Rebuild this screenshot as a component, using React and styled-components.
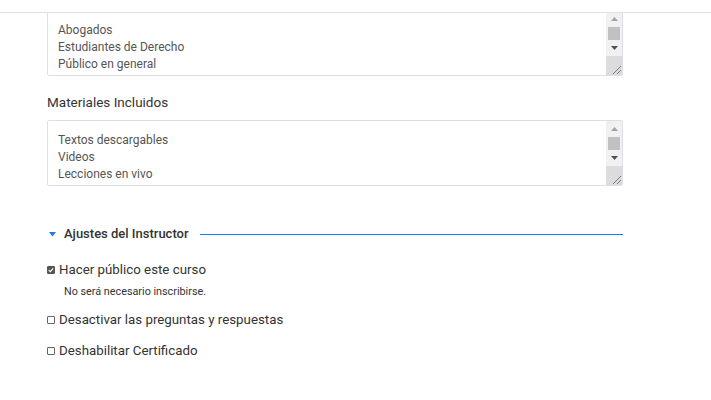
import React from 'react'
import styled, { createGlobalStyle } from 'styled-components'

const GlobalStyle = createGlobalStyle`
  html, body {
    margin: 0;
    padding: 0;
    background: #fff;
    font-family: Roboto, "Liberation Sans", Arial, sans-serif;
  }
`;

const TopBar = styled.div`
  position: fixed;
  top: 0;
  left: 0;
  right: 0;
  height: 12px;
  background: #fff;
  border-bottom: 1px solid #dfe1e5;
  z-index: 2;
`;

const Page = styled.div`
  width: 576px;
  padding: 10px 0 0 47px;
`;

const Field = styled.div`
  display: flex;
  flex-direction: column;
  margin-bottom: ${p => p.$gap || 0}px;
`;

const Label = styled.label`
  font-size: 13.5px;
  line-height: 20px;
  color: #333;
  margin-bottom: 8px;
`;

const TextBox = styled.div`
  box-sizing: border-box;
  display: flex;
  width: 576px;
  height: 66px;
  border: 1px solid #dcdfe4;
  border-radius: 2px;
  overflow: hidden;
`;

const Area = styled.textarea`
  flex: 1;
  padding: 11px 10px 4px;
  border: none;
  font-family: Roboto, "Liberation Sans", Arial, sans-serif;
  font-size: 12px;
  line-height: 17px;
  color: #555;
  overflow: hidden;
  resize: none;
  outline: none;
  background: #fff;
`;

const Rail = styled.div`
  width: 16px;
  display: flex;
  flex-direction: column;
  background: #f1f1f1;
`;

const RailButton = styled.div`
  height: 16px;
  display: flex;
  align-items: center;
  justify-content: center;
`;

const Thumb = styled.div`
  height: 13px;
  margin: 0 2px;
  background: #c1c1c1;
`;

const Grip = styled.div`
  flex: 1;
  background: #dcdcdc;
  display: flex;
  align-items: flex-end;
  justify-content: flex-end;
`;

const Section = styled.div`
  margin-top: 38px;
`;

const SectionHead = styled.div`
  display: flex;
  align-items: center;
  gap: 8px;
  height: 20px;

  svg {
    margin-left: 2px;
  }
  h4 {
    margin: 0;
    font-size: 13px;
    font-weight: 500;
    line-height: 20px;
    color: #333;
    white-space: nowrap;
  }
`;

const Rule = styled.div`
  flex: 1;
  height: 1px;
  background: #1a7cf2;
  margin-left: 3px;
`;

const CheckRow = styled.label`
  display: flex;
  align-items: center;
  gap: 4px;
  margin-top: ${p => p.$top}px;
  font-size: 13.3px;
  line-height: 20px;
  color: #333;
  cursor: pointer;
`;

const Box = styled.span`
  box-sizing: border-box;
  width: 8px;
  height: 8px;
  border: 1px solid ${p => (p.$checked ? '#555' : '#666')};
  background: ${p => (p.$checked ? '#555' : '#fff')};
  border-radius: 1px;
  display: flex;
  align-items: center;
  justify-content: center;
  flex-shrink: 0;
`;

const Hint = styled.div`
  font-size: 10.8px;
  line-height: 16px;
  color: #333;
  margin: 4px 0 0 17px;
`;

const ScrollText = ({ value }) => (
  <TextBox>
    <Area readOnly defaultValue={value} />
    <Rail>
      <RailButton>
        <svg width="7" height="4" viewBox="0 0 7 4">
          <path d="M0 4 H7 L3.5 0 Z" fill="#a3a3a3" />
        </svg>
      </RailButton>
      <Thumb />
      <RailButton>
        <svg width="7" height="4" viewBox="0 0 7 4">
          <path d="M0 0 H7 L3.5 4 Z" fill="#505050" />
        </svg>
      </RailButton>
      <Grip>
        <svg width="10" height="10" viewBox="0 0 10 10">
          <path d="M1 9 L9 1 M5 9 L9 5" stroke="#7a7a7a" strokeWidth="1" />
        </svg>
      </Grip>
    </Rail>
  </TextBox>
);

const Checkbox = ({ checked, children, top }) => (
  <CheckRow $top={top}>
    <Box $checked={checked}>
      {checked && (
        <svg width="6" height="6" viewBox="0 0 6 6">
          <path d="M0.8 3.1 L2.3 4.6 L5.2 1.3" stroke="#fff" strokeWidth="1.2" fill="none" />
        </svg>
      )}
    </Box>
    {children}
  </CheckRow>
);

const App = () => {
  return (
    <>
      <GlobalStyle />
      <TopBar />
      <Page>
        <Field $gap={16}>
          <ScrollText value={'Abogados\nEstudiantes de Derecho\nPúblico en general\n'} />
        </Field>
        <Field>
          <Label>Materiales Incluidos</Label>
          <ScrollText value={'Textos descargables\nVideos\nLecciones en vivo\n'} />
        </Field>

        <Section>
          <SectionHead>
            <svg width="7" height="5" viewBox="0 0 7 5">
              <path d="M0 0 H7 L3.5 4.5 Z" fill="#1a7cf2" />
            </svg>
            <h4>Ajustes del Instructor</h4>
            <Rule />
          </SectionHead>

          <Checkbox checked top={16}>Hacer público este curso</Checkbox>
          <Hint>No será necesario inscribirse.</Hint>
          <Checkbox top={10}>Desactivar las preguntas y respuestas</Checkbox>
          <Checkbox top={11}>Deshabilitar Certificado</Checkbox>
        </Section>
      </Page>
    </>
  )
}

export default App
